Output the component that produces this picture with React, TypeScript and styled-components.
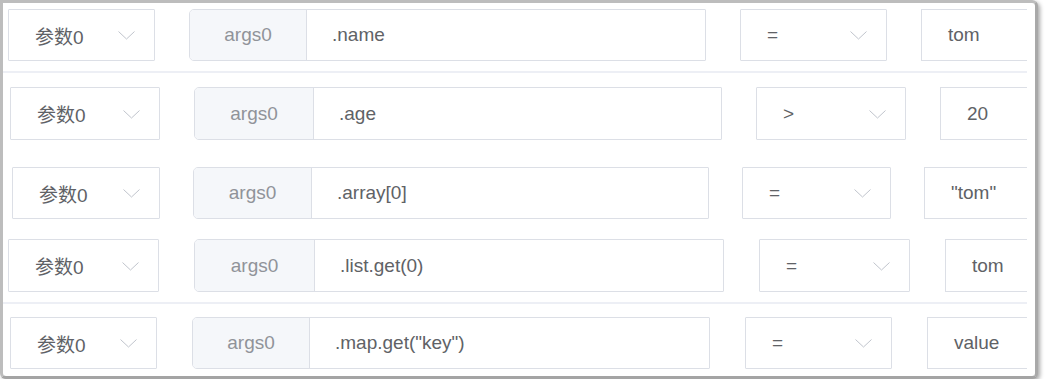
import React from "react";
import styled, { createGlobalStyle } from "styled-components";

const GlobalStyle = createGlobalStyle`
  html, body {
    margin: 0;
    padding: 0;
    background: #ffffff;
  }
  body {
    font-family: "Liberation Sans", "Noto Sans CJK SC", Arial, sans-serif;
    -webkit-font-smoothing: antialiased;
  }
`;

interface RowSpec {
  left: number;
  height: number;
  gap: number;
  selW: number;
  groupW: number;
  addonW: number;
  opW: number;
  padTop: number;
  padBottom: number;
  divider?: boolean;
  path: string;
  op: string;
  value: string;
}

const rows: RowSpec[] = [
  { left: 5, height: 52, gap: 34, selW: 147, groupW: 517, addonW: 117, opW: 147, padTop: 6, padBottom: 10, divider: true, path: ".name", op: "=", value: "tom" },
  { left: 7, height: 53, gap: 34, selW: 150, groupW: 528, addonW: 119, opW: 150, padTop: 14, padBottom: 0, path: ".age", op: ">", value: "20" },
  { left: 9, height: 52, gap: 33, selW: 148, groupW: 516, addonW: 118, opW: 149, padTop: 27, padBottom: 0, path: ".array[0]", op: "=", value: "\"tom\"" },
  { left: 5, height: 53, gap: 35, selW: 151, groupW: 530, addonW: 120, opW: 151, padTop: 20, padBottom: 10, divider: true, path: ".list.get(0)", op: "=", value: "tom" },
  { left: 7, height: 52, gap: 35, selW: 147, groupW: 518, addonW: 117, opW: 147, padTop: 13, padBottom: 7, path: ".map.get(\"key\")", op: "=", value: "value" },
];

const Chevron: React.FC = () => (
  <svg width="17" height="9" viewBox="0 0 17 9" fill="none">
    <polyline points="0.5,0.5 8.5,8 16.5,0.5" stroke="#c0c4cc" strokeWidth="1" />
  </svg>
);

const Select: React.FC<{ width: number; label: string }> = ({ width, label }) => (
  <SelectBox style={{ width }}>
    <span>{label}</span>
    <Chevron />
  </SelectBox>
);

export default function App() {
  return (
    <>
      <GlobalStyle />
      <Panel>
        <Content>
          {rows.map((r, i) => (
            <Row
              key={i}
              $left={r.left}
              $height={r.height}
              $gap={r.gap}
              $padTop={r.padTop}
              $padBottom={r.padBottom}
              $divider={!!r.divider}
            >
              <Select width={r.selW} label="参数0" />
              <Group style={{ width: r.groupW }}>
                <Addon style={{ width: r.addonW }}>args0</Addon>
                <PathInput>{r.path}</PathInput>
              </Group>
              <Select width={r.opW} label={r.op} />
              <ValueInput>{r.value}</ValueInput>
            </Row>
          ))}
        </Content>
      </Panel>
    </>
  );
}

const Panel = styled.div`
  box-sizing: border-box;
  width: 1038px;
  height: 379px;
  border: 3px solid #bdbdbd;
  border-right-color: #a9a9a9;
  border-bottom-color: #a4a4a4;
  border-radius: 0 6px 6px 6px;
  background: #ffffff;
  box-shadow: 2px 2px 4px rgba(0, 0, 0, 0.35);
  padding-right: 8px;
`;

const Content = styled.div`
  height: 100%;
  overflow: hidden;
  display: flex;
  flex-direction: column;
`;

const Row = styled.div<{
  $left: number;
  $height: number;
  $gap: number;
  $padTop: number;
  $padBottom: number;
  $divider: boolean;
}>`
  display: flex;
  flex: none;
  gap: ${(p) => p.$gap}px;
  padding: ${(p) => `${p.$padTop}px 0 ${p.$padBottom}px ${p.$left}px`};
  height: ${(p) => p.$height}px;
  border-bottom: ${(p) => (p.$divider ? "2px solid #edeff5" : "none")};
  white-space: nowrap;

  & > * {
    flex: none;
    height: 100%;
  }
`;

const fieldText = `
  font-size: 19px;
  color: #606266;
  box-sizing: border-box;
  display: flex;
  align-items: center;
`;

const SelectBox = styled.div`
  ${fieldText}
  justify-content: space-between;
  border: 1px solid #dcdfe6;
  border-radius: 1px;
  padding: 0 19px 0 26px;
  background: #fff;

  svg {
    margin-top: 1px;
  }
`;

const Group = styled.div`
  display: flex;
  box-sizing: border-box;
  border: 1px solid #dcdfe6;
  border-radius: 5px 1px 1px 5px;
  overflow: hidden;
`;

const Addon = styled.div`
  ${fieldText}
  justify-content: center;
  flex: none;
  background: #f5f7fa;
  color: #909399;
  border-right: 1px solid #dcdfe6;
`;

const PathInput = styled.div`
  ${fieldText}
  flex: 1;
  padding-left: 25px;
  background: #fff;
`;

const ValueInput = styled.div`
  ${fieldText}
  width: 200px;
  border: 1px solid #dcdfe6;
  padding-left: 26px;
  background: #fff;
`;
